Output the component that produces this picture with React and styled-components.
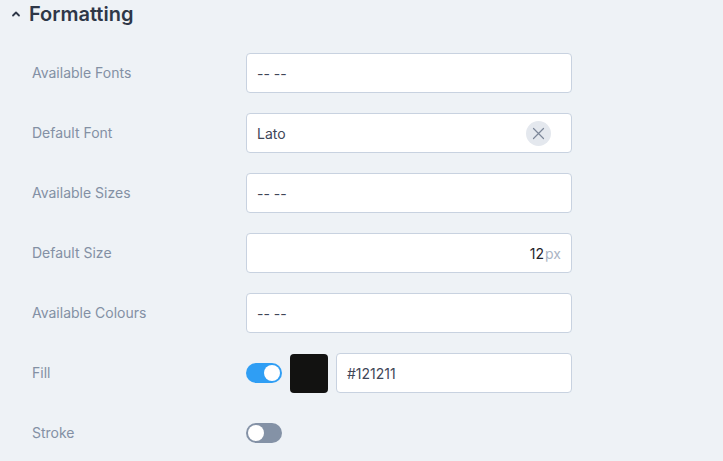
import React, { useState } from "react";
import styled, { createGlobalStyle } from "styled-components";

const GlobalStyle = createGlobalStyle`
  html, body {
    margin: 0;
    padding: 0;
    background: #eef2f6;
    font-family: "Inter", "Noto Sans", sans-serif;
  }
`;

const Panel = styled.div`
  width: 723px;
  height: 461px;
  background: #eef2f6;
  overflow: hidden;
`;

const Header = styled.div`
  display: flex;
  align-items: center;
  gap: 8px;
  height: 28px;
  padding-left: 11px;
  color: #2e3748;
  font-size: 20px;
  font-weight: 600;
`;

const Rows = styled.div`
  display: flex;
  flex-direction: column;
  gap: 20px;
  margin-top: 25px;
  padding-left: 32px;
`;

const Row = styled.div`
  display: grid;
  grid-template-columns: 214px 326px;
  align-items: center;
  height: 40px;
`;

const Label = styled.div`
  font-size: 14px;
  color: #8390a4;
  margin-top: -1px;
`;

const Field = styled.div`
  display: flex;
  align-items: center;
  justify-content: ${(p) => (p.$right ? "flex-end" : "space-between")};
  box-sizing: border-box;
  height: 40px;
  width: ${(p) => p.$width || "326px"};
  padding: 0 10px;
  background: #fff;
  border: 1px solid #c8d2e0;
  border-radius: 4px;
  font-size: 14px;
  color: #3f4657;
`;

const Value = styled.span`
  color: ${(p) => (p.$dark ? "#1f232b" : "#3f4657")};
`;

const Unit = styled.span`
  color: #aab5c4;
  margin-left: 1px;
`;

const ClearButton = styled.button`
  display: flex;
  align-items: center;
  justify-content: center;
  width: 25px;
  height: 25px;
  margin-right: 10px;
  padding: 0;
  border: none;
  border-radius: 50%;
  background: #e4e8ee;
  color: #7c8799;
`;

const Controls = styled.div`
  display: flex;
  align-items: center;
  gap: 8px;
`;

const Toggle = styled.button`
  position: relative;
  width: 36px;
  height: 20px;
  padding: 0;
  border: none;
  border-radius: 10px;
  background: ${(p) => (p.$on ? "#2f9ef4" : "#8492a6")};
  cursor: pointer;

  &::after {
    content: "";
    position: absolute;
    top: 2px;
    left: ${(p) => (p.$on ? "18px" : "2px")};
    width: 16px;
    height: 16px;
    border-radius: 50%;
    background: #fff;
  }
`;

const Swatch = styled.div`
  width: 38px;
  height: 39px;
  border-radius: 4px;
  background: ${(p) => p.$color};
`;

const Chevron = () => (
  <svg width="10" height="10" viewBox="0 0 10 10" fill="none">
    <path d="M2 6.5L5 3.5L8 6.5" stroke="#2e3748" strokeWidth="1.8" strokeLinecap="round" strokeLinejoin="round" />
  </svg>
);

const CloseIcon = () => (
  <svg width="13" height="13" viewBox="0 0 13 13" fill="none">
    <path d="M1.5 1.5L11.5 11.5M11.5 1.5L1.5 11.5" stroke="currentColor" strokeWidth="1.2" strokeLinecap="round" />
  </svg>
);

const App = () => {
  const [fill, setFill] = useState(true);
  const [stroke, setStroke] = useState(false);

  return (
    <Panel>
      <GlobalStyle />
      <Header>
        <Chevron />
        Formatting
      </Header>
      <Rows>
        <Row>
          <Label>Available Fonts</Label>
          <Field>
            <Value>-- --</Value>
          </Field>
        </Row>
        <Row>
          <Label>Default Font</Label>
          <Field>
            <Value>Lato</Value>
            <ClearButton>
              <CloseIcon />
            </ClearButton>
          </Field>
        </Row>
        <Row>
          <Label>Available Sizes</Label>
          <Field>
            <Value>-- --</Value>
          </Field>
        </Row>
        <Row>
          <Label>Default Size</Label>
          <Field $right>
            <Value $dark>12</Value>
            <Unit>px</Unit>
          </Field>
        </Row>
        <Row>
          <Label>Available Colours</Label>
          <Field>
            <Value>-- --</Value>
          </Field>
        </Row>
        <Row>
          <Label>Fill</Label>
          <Controls>
            <Toggle $on={fill} onClick={() => setFill(!fill)} />
            <Swatch $color="#121211" />
            <Field $width="236px">
              <Value>#121211</Value>
            </Field>
          </Controls>
        </Row>
        <Row>
          <Label>Stroke</Label>
          <Controls>
            <Toggle $on={stroke} onClick={() => setStroke(!stroke)} />
          </Controls>
        </Row>
      </Rows>
    </Panel>
  );
};

export default App;
